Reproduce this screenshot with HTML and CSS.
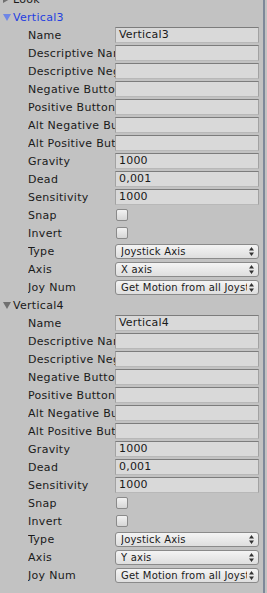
FILE: index.html
```html
<!DOCTYPE html>
<html lang="en">
<head>
    <meta charset="UTF-8">
    <meta name="viewport" content="width=device-width, initial-scale=1.0">
    <title>Input Manager</title>
    <link rel="stylesheet" href="styles.css">
</head>
<body>
    <div class="window">
        <div class="panel">
            <!-- previous axis, scrolled mostly out of view -->
            <div class="foldout cut">
                <span class="arrow right"></span>Look
            </div>

            <div class="foldout active">
                <span class="arrow down"></span>Vertical3
            </div>
            <div class="row"><label>Name</label><div class="field">Vertical3</div></div>
            <div class="row"><label>Descriptive Name</label><div class="field"></div></div>
            <div class="row"><label>Descriptive Negative Name</label><div class="field"></div></div>
            <div class="row"><label>Negative Button</label><div class="field"></div></div>
            <div class="row"><label>Positive Button</label><div class="field"></div></div>
            <div class="row"><label>Alt Negative Button</label><div class="field"></div></div>
            <div class="row"><label>Alt Positive Button</label><div class="field"></div></div>
            <div class="row"><label>Gravity</label><div class="field">1000</div></div>
            <div class="row"><label>Dead</label><div class="field">0,001</div></div>
            <div class="row"><label>Sensitivity</label><div class="field">1000</div></div>
            <div class="row"><label>Snap</label><div class="check"></div></div>
            <div class="row"><label>Invert</label><div class="check"></div></div>
            <div class="row"><label>Type</label><div class="popup"><span>Joystick Axis</span><svg viewBox="0 0 5 9" width="5" height="9"><path d="M2.5 0L5 3.5H0Z M2.5 9L5 5.5H0Z"/></svg></div></div>
            <div class="row"><label>Axis</label><div class="popup"><span>X axis</span><svg viewBox="0 0 5 9" width="5" height="9"><path d="M2.5 0L5 3.5H0Z M2.5 9L5 5.5H0Z"/></svg></div></div>
            <div class="row"><label>Joy Num</label><div class="popup"><span>Get Motion from all Joysticks</span><svg viewBox="0 0 5 9" width="5" height="9"><path d="M2.5 0L5 3.5H0Z M2.5 9L5 5.5H0Z"/></svg></div></div>

            <div class="foldout">
                <span class="arrow down"></span>Vertical4
            </div>
            <div class="row"><label>Name</label><div class="field">Vertical4</div></div>
            <div class="row"><label>Descriptive Name</label><div class="field"></div></div>
            <div class="row"><label>Descriptive Negative Name</label><div class="field"></div></div>
            <div class="row"><label>Negative Button</label><div class="field"></div></div>
            <div class="row"><label>Positive Button</label><div class="field"></div></div>
            <div class="row"><label>Alt Negative Button</label><div class="field"></div></div>
            <div class="row"><label>Alt Positive Button</label><div class="field"></div></div>
            <div class="row"><label>Gravity</label><div class="field">1000</div></div>
            <div class="row"><label>Dead</label><div class="field">0,001</div></div>
            <div class="row"><label>Sensitivity</label><div class="field">1000</div></div>
            <div class="row"><label>Snap</label><div class="check"></div></div>
            <div class="row"><label>Invert</label><div class="check"></div></div>
            <div class="row"><label>Type</label><div class="popup"><span>Joystick Axis</span><svg viewBox="0 0 5 9" width="5" height="9"><path d="M2.5 0L5 3.5H0Z M2.5 9L5 5.5H0Z"/></svg></div></div>
            <div class="row"><label>Axis</label><div class="popup"><span>Y axis</span><svg viewBox="0 0 5 9" width="5" height="9"><path d="M2.5 0L5 3.5H0Z M2.5 9L5 5.5H0Z"/></svg></div></div>
            <div class="row"><label>Joy Num</label><div class="popup"><span>Get Motion from all Joysticks</span><svg viewBox="0 0 5 9" width="5" height="9"><path d="M2.5 0L5 3.5H0Z M2.5 9L5 5.5H0Z"/></svg></div></div>
        </div>
        <div class="edge"></div>
    </div>
</body>
</html>
```

FILE: styles.css
```css
body {
    margin: 0;
    padding: 0;
    background-color: #c2c2c2;
    font-family: "DejaVu Sans", sans-serif;
    font-size: 11px;
    color: #1a1a1a;
    overflow: hidden;
}

.window {
    display: flex;
    height: 593px;
}

.panel {
    width: 263px;
    overflow: hidden;
}

.edge {
    width: 2px;
    background-color: #7e8899;
}

.foldout {
    display: flex;
    align-items: center;
    height: 18px;
    padding-left: 3px;
    white-space: nowrap;
    letter-spacing: 0.3px;
}

.foldout.cut {
    margin-top: -10px;
}

.foldout.active {
    color: #1f3ee0;
}

.arrow {
    display: inline-block;
    width: 0;
    height: 0;
    margin-right: 3px;
}

.arrow.down {
    border-left: 4px solid transparent;
    border-right: 4px solid transparent;
    border-top: 7px solid #707070;
    margin-right: 2px;
}

.foldout.active .arrow.down {
    border-top-color: #6f86e6;
}

.arrow.right {
    border-top: 4px solid transparent;
    border-bottom: 4px solid transparent;
    border-left: 7px solid #707070;
}

.row {
    display: flex;
    align-items: center;
    height: 18px;
    padding-left: 28px;
    padding-right: 4px;
}

.row label {
    width: 87px;
    flex-shrink: 0;
    overflow: hidden;
    white-space: nowrap;
    letter-spacing: 0.3px;
}

.field {
    width: 144px;
    height: 16px;
    box-sizing: border-box;
    background-color: #d9d9d9;
    border: 1px solid #a2a2a2;
    border-top-color: #7c7c7c;
    border-bottom-color: #b8b8b8;
    padding-left: 3px;
    line-height: 14px;
    white-space: nowrap;
    overflow: hidden;
    letter-spacing: 0.2px;
}

.check {
    width: 12px;
    height: 12px;
    box-sizing: border-box;
    margin-left: 1px;
    border: 1px solid #8a8a8a;
    border-radius: 2px;
    background: linear-gradient(#f2f2f2, #d6d6d6);
}

.popup {
    display: flex;
    align-items: center;
    justify-content: space-between;
    width: 144px;
    height: 15px;
    box-sizing: border-box;
    border: 1px solid #8a8a8a;
    border-radius: 3px;
    background: linear-gradient(#f4f4f4, #dedede);
    padding: 0 4px 0 5px;
    font-size: 10px;
    letter-spacing: 0.2px;
    white-space: nowrap;
    overflow: hidden;
}

.popup span {
    overflow: hidden;
    flex: 1;
}

.popup svg {
    fill: #333;
    flex-shrink: 0;
    margin-left: 2px;
}
```
